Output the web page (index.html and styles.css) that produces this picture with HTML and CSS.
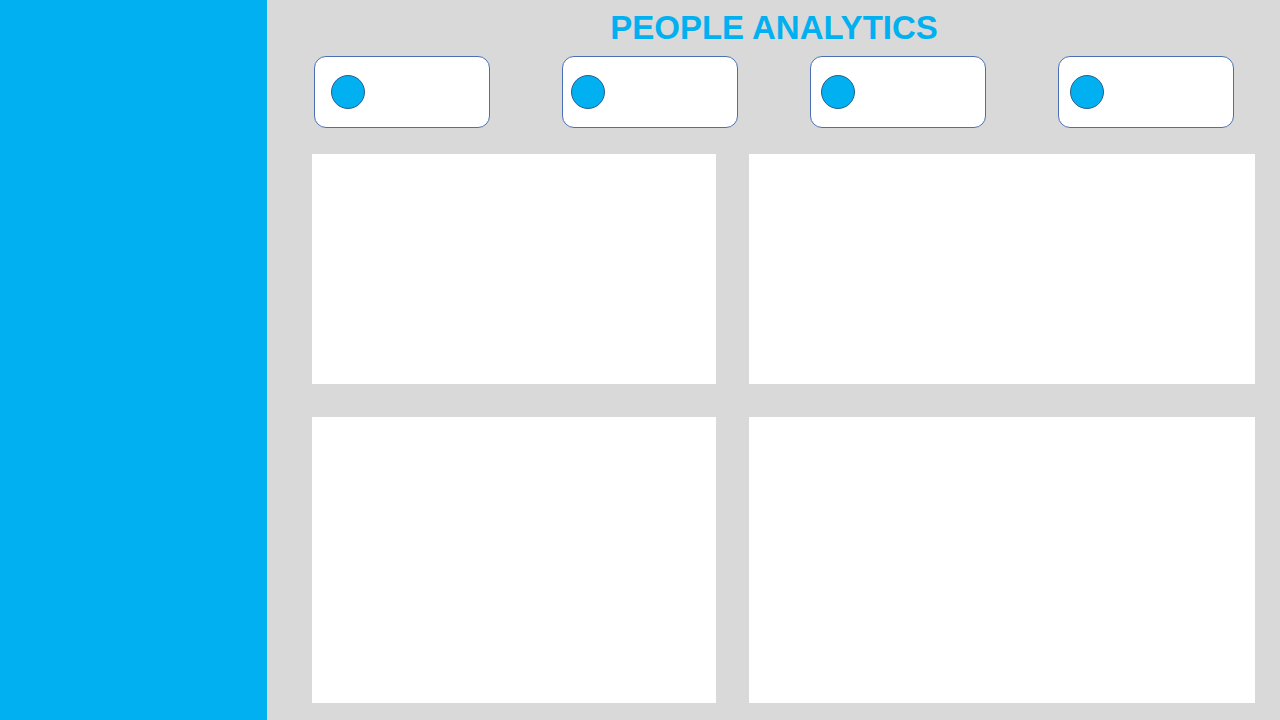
FILE: index.html
```html
<!DOCTYPE html>
<html lang="en">
<head>
<meta charset="utf-8">
<title>People Analytics</title>
<link rel="stylesheet" href="styles.css">
</head>
<body>
<div class="app">
  <aside class="sidebar"></aside>
  <main class="main">
    <h1 class="title">PEOPLE ANALYTICS</h1>
    <div class="kpis">
      <div class="kpi kpi-1"><span class="dot"></span></div>
      <div class="kpi kpi-2"><span class="dot"></span></div>
      <div class="kpi kpi-3"><span class="dot"></span></div>
      <div class="kpi kpi-4"><span class="dot"></span></div>
    </div>
    <div class="panels">
      <div class="panel"></div>
      <div class="panel"></div>
      <div class="panel"></div>
      <div class="panel"></div>
    </div>
  </main>
</div>
</body>
</html>
```
FILE: styles.css
```css
html, body {
  margin: 0;
  padding: 0;
  height: 100%;
}
body {
  font-family: "Liberation Sans", Arial, sans-serif;
  background: #d9d9d9;
}
.app {
  display: flex;
  width: 1280px;
  height: 720px;
  overflow: hidden;
}
.sidebar {
  width: 267px;
  flex: none;
  background: #00b0f0;
}
.main {
  flex: 1;
  display: flex;
  flex-direction: column;
  background: #d9d9d9;
}
.title {
  margin: 0;
  height: 56px;
  line-height: 56px;
  text-align: center;
  font-size: 33px;
  font-weight: bold;
  letter-spacing: 0;
  color: #00b0f0;
}
.kpis {
  padding: 0 47px;
  display: flex;
  gap: 72px;
}
.kpi {
  box-sizing: border-box;
  width: 176px;
  height: 72px;
  background: #fff;
  border: 1px solid #4a6fb5;
  border-radius: 12px;
  display: flex;
  align-items: center;
}
.dot {
  box-sizing: border-box;
  width: 34px;
  height: 34px;
  border-radius: 50%;
  background: #00b0f0;
  border: 1px solid #2a5f8f;
}
.kpi-1 .dot { margin-left: 16px; }
.kpi-2 .dot { margin-left: 8px; }
.kpi-3 .dot { margin-left: 10px; }
.kpi-4 .dot { margin-left: 11px; }
.panels {
  margin-top: 26px;
  padding-left: 45px;
  display: grid;
  grid-template-columns: 404px 506px;
  grid-template-rows: 230px 286px;
  column-gap: 33px;
  row-gap: 33px;
}
.panel {
  background: #fff;
}
```
